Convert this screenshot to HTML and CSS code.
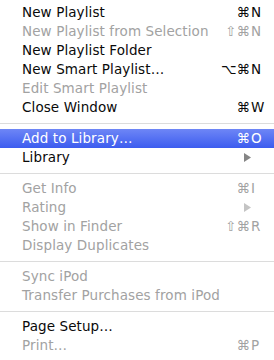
FILE: index.html
```html
<!DOCTYPE html>
<html>
<head>
<meta charset="utf-8">
<link rel="stylesheet" href="styles.css">
</head>
<body>
<ul class="menu">
  <li class="item"><span class="label">New Playlist</span><span class="mods">⌘</span><span class="key">N</span></li>
  <li class="item off"><span class="label">New Playlist from Selection</span><span class="mods">⇧⌘</span><span class="key">N</span></li>
  <li class="item"><span class="label">New Playlist Folder</span></li>
  <li class="item"><span class="label">New Smart Playlist…</span><span class="mods">⌥⌘</span><span class="key">N</span></li>
  <li class="item off"><span class="label">Edit Smart Playlist</span></li>
  <li class="item"><span class="label">Close Window</span><span class="mods">⌘</span><span class="key">W</span></li>
  <li class="sep"></li>
  <li class="item active"><span class="label">Add to Library…</span><span class="mods">⌘</span><span class="key">O</span></li>
  <li class="item"><span class="label">Library</span><span class="key"><svg class="arrow" width="7" height="9" viewBox="0 0 7 9"><path d="M0 0 L7 4.5 L0 9 Z"/></svg></span></li>
  <li class="sep"></li>
  <li class="item off"><span class="label">Get Info</span><span class="mods">⌘</span><span class="key">I</span></li>
  <li class="item off"><span class="label">Rating</span><span class="key"><svg class="arrow" width="7" height="9" viewBox="0 0 7 9"><path d="M0 0 L7 4.5 L0 9 Z"/></svg></span></li>
  <li class="item off"><span class="label">Show in Finder</span><span class="mods">⇧⌘</span><span class="key">R</span></li>
  <li class="item off"><span class="label">Display Duplicates</span></li>
  <li class="sep"></li>
  <li class="item off"><span class="label">Sync iPod</span></li>
  <li class="item off"><span class="label">Transfer Purchases from iPod</span></li>
  <li class="sep"></li>
  <li class="item"><span class="label">Page Setup…</span></li>
  <li class="item off"><span class="label">Print…</span><span class="mods">⌘</span><span class="key">P</span></li>
</ul>
</body>
</html>
```

FILE: styles.css
```css
html, body {
  margin: 0;
  padding: 0;
  background: #ffffff;
}

.menu {
  list-style: none;
  margin: 0;
  padding: 3px 0 0 0;
  font-family: "DejaVu Sans", "Liberation Sans", sans-serif;
  font-size: 13.5px;
  color: #0a0a0a;
}

.item {
  display: grid;
  grid-template-columns: 1fr auto 13px;
  align-items: center;
  height: 19px;
  line-height: 19px;
  padding: 0 10px 0 22px;
  white-space: nowrap;
}

.label {
  letter-spacing: 0.1px;
}

.mods {
  padding-right: 1px;
  text-align: right;
}

.key {
  display: flex;
  align-items: center;
}

.arrow {
  margin-left: 5px;
  fill: #858585;
}

.off {
  color: #a2a2a2;
}

.off .arrow {
  fill: #c4c4c4;
}

.active {
  color: #ffffff;
  background: linear-gradient(#6e86f6, #3c5cef);
}

.sep {
  height: 12px;
  display: flex;
  align-items: center;
}

.sep::before {
  content: "";
  display: block;
  width: 100%;
  height: 1px;
  background: #dcdcdc;
}
```
